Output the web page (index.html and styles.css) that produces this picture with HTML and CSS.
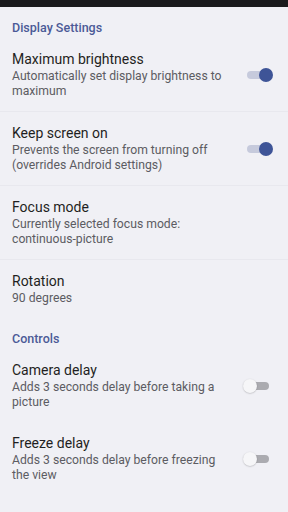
FILE: index.html
```html
<!DOCTYPE html>
<html>
<head>
<meta charset="utf-8">
<link rel="stylesheet" href="styles.css">
</head>
<body>
<div class="statusbar"></div>
<div class="list">
  <div class="header">Display Settings</div>
  <div class="item divided">
    <div class="text">
      <div class="title">Maximum brightness</div>
      <div class="summary">Automatically set display brightness to maximum</div>
    </div>
    <div class="switch on"><span class="track"></span><span class="thumb"></span></div>
  </div>
  <div class="item divided">
    <div class="text">
      <div class="title">Keep screen on</div>
      <div class="summary">Prevents the screen from turning off (overrides Android settings)</div>
    </div>
    <div class="switch on"><span class="track"></span><span class="thumb"></span></div>
  </div>
  <div class="item divided">
    <div class="text">
      <div class="title">Focus mode</div>
      <div class="summary">Currently selected focus mode: continuous-picture</div>
    </div>
  </div>
  <div class="item">
    <div class="text">
      <div class="title">Rotation</div>
      <div class="summary">90 degrees</div>
    </div>
  </div>
  <div class="header">Controls</div>
  <div class="item">
    <div class="text">
      <div class="title">Camera delay</div>
      <div class="summary">Adds 3 seconds delay before taking a picture</div>
    </div>
    <div class="switch off"><span class="track"></span><span class="thumb"></span></div>
  </div>
  <div class="item">
    <div class="text">
      <div class="title">Freeze delay</div>
      <div class="summary">Adds 3 seconds delay before freezing the view</div>
    </div>
    <div class="switch off"><span class="track"></span><span class="thumb"></span></div>
  </div>
</div>
</body>
</html>
```
FILE: styles.css
```css
html, body {
  margin: 0;
  padding: 0;
  background: #f0f0f5;
  font-family: Roboto, "Noto Sans", sans-serif;
}
.statusbar {
  height: 7px;
  background: #1b1b1d;
}
.list {
  display: flex;
  flex-direction: column;
}
.header {
  padding: 13px 12px 2px;
  line-height: 16px;
  font-size: 12.5px;
  font-weight: 500;
  color: #4b5a97;
}
.item {
  display: flex;
  align-items: center;
  padding: 12px 14px 12px 12px;
}
.item.divided {
  border-bottom: 1px solid #e8e8ee;
  padding-bottom: 12px;
}
.text {
  flex: 1;
  max-width: 218px;
}
.title {
  font-size: 14px;
  line-height: 19px;
  color: #1f1f22;
}
.summary {
  font-size: 12.2px;
  line-height: 15px;
  color: #5c5c62;
}
.switch {
  margin-left: auto;
  position: relative;
  width: 32px;
  height: 16px;
  flex: none;
}
.track {
  position: absolute;
  left: 5px;
  top: 4px;
  width: 22px;
  height: 8px;
  border-radius: 4px;
}
.thumb {
  position: absolute;
  top: 1px;
  width: 14px;
  height: 14px;
  border-radius: 50%;
}
.switch.on .track { background: #c6cadc; }
.switch.on .thumb { right: 1px; background: #3e5497; }
.switch.off .track { background: #ababb0; }
.switch.off .thumb {
  left: 1px;
  background: #f6f6f8;
  box-shadow: 0 0.5px 1.5px rgba(0,0,0,0.25);
}
```
